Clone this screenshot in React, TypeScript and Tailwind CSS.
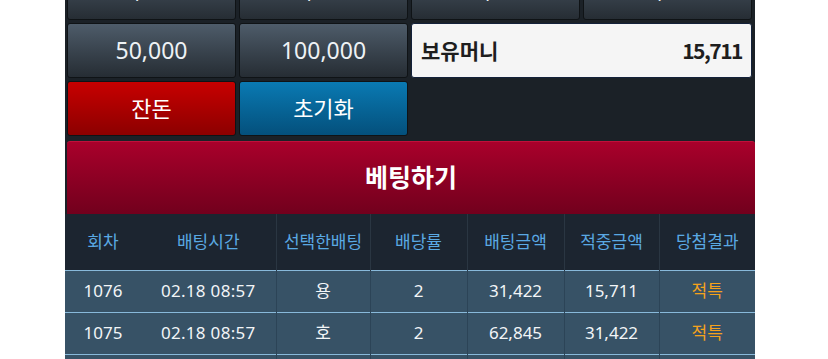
import React from "react";

const topAmounts = ["1,000", "5,000", "10,000", "30,000"];

const history = [
  { round: "1076", time: "02.18 08:57", pick: "용", odds: "2", bet: "31,422", win: "15,711", result: "적특" },
  { round: "1075", time: "02.18 08:57", pick: "호", odds: "2", bet: "62,845", win: "31,422", result: "적특" },
  { round: "1074", time: "02.18 08:56", pick: "용", odds: "2", bet: "10,000", win: "20,000", result: "적중" },
];

const cols = ["w-[76px]", "w-[135px]", "w-[94px]", "w-[97px]", "w-[97px]", "w-[95px]", "w-[96px]"];

function AmountButton({ label, top = false }: { label: string; top?: boolean }) {
  return (
    <button
      className={`h-[55px] rounded-[3px] border border-[#0f1316] bg-gradient-to-b from-[#4e5c6a] to-[#262d34] text-[23px] text-[#eef2f5] ${top ? "pb-[7px]" : ""}`}
    >
      {label}
    </button>
  );
}

export default function App() {
  return (
    <div className="h-[359px] w-full overflow-hidden bg-white font-['Noto_Sans','Noto_Sans_CJK_KR',sans-serif]">
      <div className="ml-[65px] mt-[-35px] w-[690px] bg-[#1b2127]">
        {/* amount buttons */}
        <div className="grid grid-cols-[169px_169px_169px_169px] gap-[3px] pl-[2px]">
          {topAmounts.map((a) => (
            <AmountButton key={a} label={a} top />
          ))}
          <AmountButton label="50,000" />
          <AmountButton label="100,000" />
          <div className="col-span-2 flex h-[55px] items-center justify-between rounded-[3px] border border-[#13213a] bg-[#f5f5f5] px-[9px] font-['Noto_Sans_CJK_KR',sans-serif] text-[21px] font-bold text-[#1e1e1e]">
            <span>보유머니</span>
            <span className="tracking-[-1.5px]">15,711</span>
          </div>
          <button className="h-[55px] rounded-[3px] border border-[#0f1316] bg-gradient-to-b from-[#c80000] to-[#8c0000] text-[22px] text-white">
            잔돈
          </button>
          <button className="h-[55px] rounded-[3px] border border-[#0f1316] bg-gradient-to-b from-[#0a7ab3] to-[#04507c] text-[22px] text-white">
            초기화
          </button>
        </div>

        {/* bet button */}
        <div className="pl-[2px] pt-[5px]">
          <button className="h-[73px] w-[688px] rounded-t-[3px] border-t border-[#c0103a] bg-gradient-to-b from-[#a9002b] to-[#72001d] text-[25px] font-bold text-white">
            베팅하기
          </button>
        </div>

        {/* history table */}
        <table className="w-[690px] table-fixed border-collapse text-center">
          <thead>
            <tr className="h-[56px] bg-[#1c2530] text-[17px] text-[#5aa9e3]">
              {["회차", "배팅시간", "선택한배팅", "배당률", "배팅금액", "적중금액", "당첨결과"].map((h, i) => (
                <th
                  key={h}
                  className={`${cols[i]} font-normal ${i > 1 ? "border-l border-[#2a3642]" : ""}`}
                >
                  {h}
                </th>
              ))}
            </tr>
          </thead>
          <tbody>
            {history.map((r) => (
              <tr key={r.round} className="h-[42px] border-t-[1.5px] border-[#88b9da] bg-[#375266] text-[17px] text-[#f2f5f7]">
                <td>{r.round}</td>
                <td className="tracking-[0.3px]">{r.time}</td>
                <td className="border-l border-[#2c4457]">{r.pick}</td>
                <td className="border-l border-[#2c4457]">{r.odds}</td>
                <td className="border-l border-[#2c4457]">{r.bet}</td>
                <td className="border-l border-[#2c4457]">{r.win}</td>
                <td className="border-l border-[#2c4457] text-[#f4a21c]">{r.result}</td>
              </tr>
            ))}
          </tbody>
        </table>
      </div>
    </div>
  );
}
